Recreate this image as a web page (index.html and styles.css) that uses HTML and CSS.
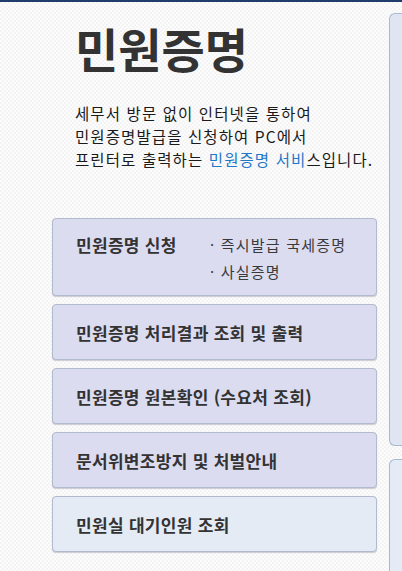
FILE: index.html
```html
<!DOCTYPE html>
<html lang="ko">
<head>
<meta charset="utf-8">
<title>민원증명</title>
<link rel="stylesheet" href="styles.css">
</head>
<body>
<div class="topbar"></div>
<div class="page">
  <main class="main">
    <header class="intro">
      <h1 class="title">민원증명</h1>
      <p class="desc">세무서 방문 없이 인터넷을 통하여<br>민원증명발급을 신청하여 PC에서<br>프린터로 출력하는 <span class="link">민원증명 서비</span>스입니다.</p>
    </header>
    <nav class="menu">
      <div class="btn btn-apply">
        <span class="btn-title">민원증명 신청</span>
        <ul class="sub">
          <li>· 즉시발급 국세증명</li>
          <li>· 사실증명</li>
        </ul>
      </div>
      <div class="btn"><span class="btn-title">민원증명 처리결과 조회 및 출력</span></div>
      <div class="btn"><span class="btn-title">민원증명 원본확인 (수요처 조회)</span></div>
      <div class="btn"><span class="btn-title">문서위변조방지 및 처벌안내</span></div>
      <div class="btn btn-light"><span class="btn-title">민원실 대기인원 조회</span></div>
    </nav>
  </main>
  <aside class="side">
    <div class="panel panel-a"></div>
    <div class="panel panel-b"></div>
  </aside>
</div>
</body>
</html>
```
FILE: styles.css
```css
html, body {
  margin: 0;
  padding: 0;
  height: 100%;
  overflow: hidden;
}
body {
  font-family: "Noto Sans CJK KR", "Noto Sans", sans-serif;
  color: #222;
  background-color: #f9f9f9;
  background-image: repeating-conic-gradient(#f4f4f4 0 25%, #fcfcfc 0 50%);
  background-size: 4px 4px;
}
.topbar {
  height: 2px;
  background: #1e3d6d;
}
.page {
  display: flex;
  align-items: flex-start;
}
.main {
  margin-left: 52px;
  width: 325px;
  flex: none;
}
.intro {
  padding-left: 23px;
}
.title {
  margin: 19px 0 0 0;
  font-size: 47px;
  line-height: 54px;
  font-weight: 700;
  color: #333;
  letter-spacing: 0;
}
.desc {
  margin: 27px 0 0 0;
  font-size: 15.5px;
  line-height: 23px;
  color: #1a1a1a;
  letter-spacing: 1.1px;
  white-space: nowrap;
}
.link {
  color: #1f78c8;
}
.menu {
  margin-top: 47px;
  display: flex;
  flex-direction: column;
  gap: 8px;
}
.btn {
  box-sizing: border-box;
  height: 56px;
  display: flex;
  align-items: center;
  padding-left: 23px;
  background: #dcdcf1;
  border: 1px solid #b2bacd;
  border-radius: 4px;
  box-shadow: 0 1px 1px rgba(60, 70, 100, 0.25);
}
.btn-light {
  background: #e4ebf4;
}
.btn-title {
  font-size: 17px;
  font-weight: 700;
  color: #333;
  line-height: 27px;
  letter-spacing: 0.3px;
  white-space: nowrap;
}
.btn-apply {
  height: 78px;
  align-items: flex-start;
  padding-top: 12px;
}
.btn-apply .btn-title {
  width: 134px;
  flex: none;
}
.sub {
  list-style: none;
  margin: 0;
  padding: 0;
  font-size: 15px;
  line-height: 27px;
  color: #3a3a3a;
  letter-spacing: 1.2px;
  white-space: nowrap;
}
.side {
  margin-left: 12px;
  flex: 1;
  display: flex;
  flex-direction: column;
  gap: 13px;
  padding-top: 11px;
}
.panel {
  border: 1px solid #a9b9d1;
  border-right: none;
  border-radius: 6px 0 0 6px;
  width: 40px;
}
.panel-a {
  height: 431px;
  background: #dfe5f3;
}
.panel-b {
  height: 200px;
  background: #e4ebf6;
  border-bottom: none;
  border-radius: 6px 0 0 0;
}
```
